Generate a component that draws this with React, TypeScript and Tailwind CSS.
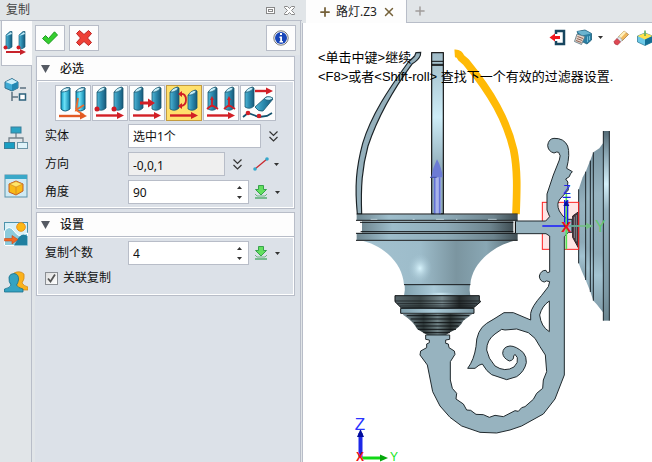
import { useState } from 'react';
import type { ReactNode } from 'react';
import { Plus, X } from 'lucide-react';

const FONT = 'font-["Noto_Sans","Noto_Sans_CJK_SC",sans-serif]';

/* ---------- icons ---------- */

function Post({ x = 0, y = 0, h = 24 }: { x?: number; y?: number; h?: number }) {
  return (
    <g transform={`translate(${x} ${y})`}>
      <path d={`M1 6 L8 1 L10 2 V${h - 2} Q6 ${h + 2} 1 ${h - 1} Z`} fill="url(#post)" stroke="#17566f" strokeWidth="0.8" />
      <path d="M1.5 6.5 Q3 1.5 9 1.2 Q9.5 5 1.5 6.5 Z" fill="#c3eefa" stroke="#17566f" strokeWidth="0.7" />
    </g>
  );
}

function Arrow({ d, head, color = '#d21f26' }: { d: string; head: string; color?: string }) {
  return (
    <>
      <path d={d} stroke={color} strokeWidth="2.4" fill="none" />
      <path d={head} fill={color} />
    </>
  );
}

const bottomArrow = <Arrow d="M3 29.5 H25" head="M24 26 L31 29.5 L24 33 Z" />;

function ModeSvg({ children }: { children: ReactNode }) {
  return (
    <svg viewBox="0 0 34 34" className="size-[34px]" aria-hidden="true">
      {children}
    </svg>
  );
}

const modes = [
  {
    name: '线性',
    icon: (
      <ModeSvg>
        <g fill="url(#cyan)" stroke="#145a78">
          <path d="M5 5 L11 1.5 L14 2 V23 Q9 27 5 23 Z" />
          <path d="M20 5 L26 1.5 L29 2 V23 Q24 27 20 23 Z" />
        </g>
        <path d="M5 6 Q7 1 14 2 Q13 6 5 6 M20 6 Q22 1 29 2 Q28 6 20 6" fill="#d9f6fd" stroke="#145a78" strokeWidth="0.8" />
        <path d="M22 12 L20 24 L28 19 M20 24 L28 29" stroke="#ee6a2c" strokeWidth="1.8" fill="none" />
        <Arrow d="M3 30 H25" head="M24 26.5 L31 30 L24 33.5 Z" color="#e25a24" />
      </ModeSvg>
    ),
  },
  {
    name: '点到点',
    icon: (
      <ModeSvg>
        <Post x={3} />
        <Post x={20} />
        <circle cx="4" cy="23" r="2.5" fill="#cf1b24" />
        <circle cx="21" cy="23" r="2.5" fill="#cf1b24" />
        {bottomArrow}
      </ModeSvg>
    ),
  },
  {
    name: '沿方向',
    icon: (
      <ModeSvg>
        <Post x={3} />
        <Post x={21} />
        <path d="M10 17 H20" stroke="#d21f26" strokeWidth="3" />
        <path d="M18 12.5 L25 17 L18 21.5 Z" fill="#d21f26" />
        {bottomArrow}
      </ModeSvg>
    ),
  },
  {
    name: '绕方向',
    icon: (
      <ModeSvg>
        <Post x={2} />
        <Post x={20} y={3} h={21} />
        <path d="M13 8 Q19 7 19 14 Q19 20 13 20" stroke="#d21f26" strokeWidth="1.8" fill="none" />
        <path d="M15 5 L11 8 L15 11 Z M15 17 L11 20 L15 23 Z" fill="#d21f26" />
        {bottomArrow}
      </ModeSvg>
    ),
  },
  {
    name: '对齐坐标',
    icon: (
      <ModeSvg>
        <Post x={3} />
        <Post x={20} />
        <path d="M8 12 V19 L3 23 M8 19 L14 23 M25 12 V19 L20 23 M25 19 L31 23" stroke="#d21f26" strokeWidth="1.8" fill="none" />
        <path d="M6 14 L8 10 L10 14 Z M23 14 L25 10 L27 14 Z" fill="#d21f26" />
        {bottomArrow}
      </ModeSvg>
    ),
  },
  {
    name: '沿路径',
    icon: (
      <ModeSvg>
        <Post x={3} h={22} />
        <path d="M14 21 L25 11 Q30 10 32 13 L22 25 Q17 26 14 21 Z" fill="url(#post)" stroke="#17566f" strokeWidth="0.8" />
        <path d="M23 13 Q26 9 32 12 Q29 16 23 13 Z" fill="#c3eefa" stroke="#17566f" strokeWidth="0.7" />
        <Arrow d="M14 5 H26" head="M25 1.5 L32 5 L25 8.5 Z" />
        <path d="M2 31 L7 27 L18 31 L26 30 L31 27" stroke="#12526e" strokeWidth="1.8" fill="none" />
        <circle cx="7" cy="27" r="2.3" fill="#d21f26" />
        <circle cx="18" cy="30" r="2.3" fill="#d21f26" />
      </ModeSvg>
    ),
  },
];

const sideTabs = [
  {
    name: '复制',
    icon: (
      <svg viewBox="0 0 24 24" className="size-6" aria-hidden="true">
        <g fill="url(#post)" stroke="#1b5f7c" strokeWidth="0.7">
          <path d="M3 4 L7 0.5 H9 V16 Q6 19 3 17 Z" />
          <path d="M16 4 L20 0.5 H22 V16 Q19 19 16 17 Z" />
        </g>
        <path d="M3 5 L8 1 L9 3 Z M16 5 L21 1 L22 3 Z" fill="#c3eefa" />
        <circle cx="2.5" cy="16.5" r="2" fill="#cf1b24" />
        <circle cx="15.5" cy="16.5" r="2" fill="#cf1b24" />
        <path d="M3 21 H18" stroke="#c7222a" strokeWidth="2" />
        <path d="M17 18 L23 21 L17 24 Z" fill="#c7222a" />
      </svg>
    ),
  },
  {
    name: '历史',
    icon: (
      <svg viewBox="0 0 24 24" className="size-6" aria-hidden="true">
        <path d="M1 4 L8 0.5 L14 4 V10 L8 13 L1 10 Z" fill="#3eaad4" stroke="#33718f" />
        <path d="M1.5 4 L8 1 L13.5 4 L8 6.5 Z" fill="#cdeffa" />
        <path d="M8 6.5 L13.5 4 V10 L8 12.5 Z" fill="#2388b3" />
        <path d="M8 14 V23 M8 19 H14 M16 10 H22" stroke="#5c7280" strokeWidth="1.5" />
        <rect x="15.5" y="16" width="6" height="6" fill="#fff" stroke="#2c627c" strokeWidth="1.5" />
      </svg>
    ),
  },
  {
    name: '装配',
    icon: (
      <svg viewBox="0 0 24 24" className="size-6" aria-hidden="true">
        <path d="M12 7 V12 M5 17 V12 H19 V17" stroke="#74828b" strokeWidth="1.3" fill="none" />
        <rect x="7" y="1" width="10" height="6" fill="#2ba3c4" stroke="#3b7f99" />
        <rect x="0.5" y="16.5" width="10" height="6" fill="#189ec3" stroke="#3b7f99" />
        <rect x="13.5" y="16.5" width="10" height="6" fill="#dff3f9" stroke="#6c95a6" />
      </svg>
    ),
  },
  {
    name: '视图',
    icon: (
      <svg viewBox="0 0 24 24" className="size-6" aria-hidden="true">
        <rect x="1" y="1" width="22" height="22" fill="#cfeaf3" stroke="#5c93aa" />
        <rect x="1" y="1" width="22" height="4" fill="#3ba8c8" />
        <path d="M5 10 L12 7 L19 10 V17 L12 21 L5 18 Z" fill="#f8b916" stroke="#c55f24" />
        <path d="M5.5 10 L12 7.5 L18.5 10 L12 13 Z" fill="#ffe668" stroke="#c9822b" strokeWidth="0.6" />
        <path d="M12 13 V20.5" stroke="#d98c20" />
      </svg>
    ),
  },
  {
    name: '场景',
    icon: (
      <svg viewBox="0 0 24 24" className="size-6" aria-hidden="true">
        <rect x="0.5" y="0.5" width="23" height="23" fill="#d8f0f7" stroke="#4d93ac" />
        <path d="M0.5 9 Q5 2 10 9 T19 13 L23.5 11 V23.5 H0.5 Z" fill="#8ccbdc" stroke="#fff" />
        <path d="M12 20 Q17 9 23.5 14 V23.5 H10 Z" fill="#1f7f9f" />
        <circle cx="17" cy="5" r="4.3" fill="#fdb813" stroke="#e98e1d" />
        <path d="M0.5 16.5 H8 V13.5 L14 17.5 L8 22 V19 H0.5 Z" fill="#f06a24" stroke="#c6481a" strokeWidth="0.6" />
      </svg>
    ),
  },
  {
    name: '用户',
    icon: (
      <svg viewBox="0 0 24 24" className="size-6" aria-hidden="true">
        <path d="M10 3 Q16 0 20 4 Q21 9 18 13 Q20 16 24 17 V20 H13 Z" fill="#fbb21c" stroke="#c98318" strokeWidth="0.7" />
        <path d="M5 7 Q6 3.5 10 3.5 Q15 4 14.5 10 Q14 13 12.5 15 Q14 18 19 19 V22 H0.5 V19 Q6 18 7 15 Q4.5 12 5 7 Z" fill="#35a3c2" stroke="#16708c" strokeWidth="0.8" />
      </svg>
    ),
  },
];

function CheckIcon() {
  return (
    <svg viewBox="0 0 16 14" className="h-3.5 w-4" aria-hidden="true">
      <path d="M0.5 7.5 L3.5 4.5 L6.5 7.5 L12.5 0.8 L15.5 4 L6.5 13 Z" fill="#35cf2f" stroke="#1f9a22" />
    </svg>
  );
}

function CrossIcon() {
  return (
    <svg viewBox="0 0 16 16" className="size-4" aria-hidden="true">
      <path d="M3.5 0.5 L8 4.5 L12.5 0.5 L15.5 3.5 L11.5 8 L15.5 12.5 L12.5 15.5 L8 11.5 L3.5 15.5 L0.5 12.5 L4.5 8 L0.5 3.5 Z" fill="#ee4036" stroke="#bd2323" strokeLinejoin="round" />
    </svg>
  );
}

function InfoIcon() {
  return (
    <svg viewBox="0 0 16 16" className="size-4" aria-hidden="true">
      <circle cx="8" cy="8" r="7.2" fill="#fff" stroke="#777" />
      <circle cx="8" cy="8" r="6" fill="#1846b8" />
      <path d="M7 3 H9 V5 H7 Z M6.5 6.5 H9 V11 H10 V12.5 H6.5 V11 H7.2 V8 H6.5 Z" fill="#fff" />
    </svg>
  );
}

function DownloadIcon() {
  return (
    <svg viewBox="0 0 14 14" className="size-3.5" aria-hidden="true">
      <path d="M4.5 0.5 H9.5 V4.5 H12.5 L7 10 L1.5 4.5 H4.5 Z" fill="#63e05f" stroke="#37a24c" />
      <path d="M1 9 L3 11 H11 L13 9" stroke="#6fb584" fill="none" />
      <path d="M1 13 H13" stroke="#56ad70" strokeWidth="1.5" />
    </svg>
  );
}

function LineIcon() {
  return (
    <svg viewBox="0 0 16 14" className="h-3.5 w-4" aria-hidden="true">
      <path d="M2 12 L14 2" stroke="#c9272e" strokeWidth="1.3" />
      <circle cx="2" cy="12" r="1.8" fill="#35a9cc" />
      <circle cx="14" cy="2" r="1.8" fill="#35a9cc" />
    </svg>
  );
}

function ChevronsIcon() {
  return (
    <svg viewBox="0 0 9 11" className="h-[11px] w-[9px]" aria-hidden="true">
      <path d="M0.5 0.5 L4.5 4.5 L8.5 0.5 M0.5 6 L4.5 10 L8.5 6" stroke="#333" strokeWidth="1.2" fill="none" />
    </svg>
  );
}

function Caret({ up = false }: { up?: boolean }) {
  return (
    <svg viewBox="0 0 5 3" className="h-[3px] w-[5px]" aria-hidden="true">
      <path d={up ? 'M0 3 L2.5 0 L5 3 Z' : 'M0 0 L2.5 3 L5 0 Z'} fill="#333" />
    </svg>
  );
}

/* ---------- form panel ---------- */

function Section({ title, children }: { title: string; children: ReactNode }) {
  const [open, setOpen] = useState(true);
  return (
    <section className="border border-[#b8bdc8]">
      <button
        type="button"
        aria-expanded={open}
        onClick={() => setOpen(!open)}
        className="flex h-6 w-full items-center gap-2.5 border-b border-[#b8bdc8] bg-[#fdfdfd] pl-1 font-medium text-[#222]"
      >
        <svg viewBox="0 0 9 8" className="h-2 w-[9px]" aria-hidden="true">
          <path d="M0 0 H9 L4.5 8 Z" fill="#555a63" />
        </svg>
        {title}
      </button>
      {open && <div className="border border-white bg-[#dce1e8] px-[7px] py-[3px]">{children}</div>}
    </section>
  );
}

function Row({ id, label, children }: { id: string; label: string; children: ReactNode }) {
  return (
    <div className="flex h-6 items-center">
      <label htmlFor={id} className="w-[83px] shrink-0">
        {label}
      </label>
      {children}
    </div>
  );
}

function SpinInput({ id, initial }: { id: string; initial: number }) {
  const [value, setValue] = useState(String(initial));
  const step = (n: number) => setValue(String(Number(value) + n));
  return (
    <>
      <div className="flex h-6 w-[121px] border border-[#b8bdc8] bg-white">
        <input id={id} value={value} onChange={(e) => setValue(e.target.value)} className="min-w-0 flex-1 px-1 pt-0.5 outline-none" />
        <div className="flex w-[18px] flex-col items-center justify-center">
          <button type="button" aria-label="增加" onClick={() => step(1)} className="flex h-2.5 w-full items-center justify-center">
            <Caret up />
          </button>
          <button type="button" aria-label="减少" onClick={() => step(-1)} className="flex h-2.5 w-full items-center justify-center">
            <Caret />
          </button>
        </div>
      </div>
      <button type="button" aria-label="取值" className="ml-[5px] flex items-center gap-[7px]">
        <DownloadIcon />
        <Caret />
      </button>
    </>
  );
}

function CopyPanel() {
  const [mode, setMode] = useState(3);
  return (
    <form className="flex min-w-0 flex-1 flex-col border-r border-[#b8bdc8]" onSubmit={(e) => e.preventDefault()}>
      <div className="flex gap-1 px-[3px] pt-1 pr-1">
        <button type="submit" aria-label="确定" className="flex h-[26px] w-[30px] items-center justify-center border border-[#b8bdc8] bg-[#fdfdfd]">
          <CheckIcon />
        </button>
        <button type="button" aria-label="取消" className="flex h-[26px] w-[30px] items-center justify-center border border-[#b8bdc8] bg-[#fdfdfd]">
          <CrossIcon />
        </button>
        <button type="button" aria-label="信息" className="ml-auto flex h-[26px] w-[30px] items-center justify-center border border-[#b8bdc8] bg-[#fdfdfd]">
          <InfoIcon />
        </button>
      </div>

      <div className="mt-1 ml-[3px] flex flex-1 flex-col gap-[3px] bg-[#dce1e8] pt-px pr-[5px] pl-px">
        <Section title="必选">
          <div className="mb-[3px] flex gap-px pl-2.5">
            {modes.map((m, i) => (
              <button
                key={m.name}
                type="button"
                aria-label={m.name}
                aria-pressed={i === mode}
                onClick={() => setMode(i)}
                className={
                  i === mode
                    ? 'size-9 shrink-0 border border-[#c39b3f] bg-[#ffe06c]'
                    : 'size-9 shrink-0 border border-[#b8bdc8] bg-[#fdfdfd]'
                }
              >
                {m.icon}
              </button>
            ))}
          </div>
          <div className="flex flex-col gap-1">
            <Row id="entity" label="实体">
              <input id="entity" defaultValue="选中1个" className="h-6 w-[133px] border border-[#b8bdc8] bg-white px-1 outline-none" />
              <button type="button" aria-label="展开实体" className="ml-2">
                <ChevronsIcon />
              </button>
            </Row>
            <Row id="direction" label="方向">
              <input id="direction" defaultValue="-0,0,1" className="h-6 w-[97px] border border-[#b8bdc8] bg-[#efefef] px-1 pt-0.5 outline-none" />
              <button type="button" aria-label="展开方向" className="ml-2">
                <ChevronsIcon />
              </button>
              <button type="button" aria-label="选择方向" className="ml-[11px] flex items-center gap-[5px]">
                <LineIcon />
                <Caret />
              </button>
            </Row>
            <Row id="angle" label="角度">
              <SpinInput id="angle" initial={90} />
            </Row>
          </div>
        </Section>

        <Section title="设置">
          <Row id="count" label="复制个数">
            <SpinInput id="count" initial={4} />
          </Row>
          <label className="flex h-[26px] items-center gap-[5px]">
            <input
              type="checkbox"
              defaultChecked
              className="peer size-[13px] appearance-none border border-[#8b8f94] bg-[#f4f4f4] checked:bg-[linear-gradient(135deg,#dedede,#fff)]"
            />
            <svg viewBox="0 0 9 9" className="-ml-4 mr-0.5 hidden size-[9px] peer-checked:block" aria-hidden="true">
              <path d="M1 4.5 L3.5 7.5 L8 0.5" stroke="#555" strokeWidth="1.8" fill="none" />
            </svg>
            关联复制
          </label>
        </Section>
      </div>
    </form>
  );
}

/* ---------- 3D view ---------- */

function Lamp() {
  return (
    <svg viewBox="303 23 349 439" className="block h-[439px] w-[349px]" role="img" aria-label="路灯">
      <defs>
        <linearGradient id="bar" x2="0" y2="1">
          <stop offset="0" stopColor="#9fbac6" />
          <stop offset="0.4" stopColor="#cdedf8" />
          <stop offset="0.7" stopColor="#94b0bd" />
          <stop offset="1" stopColor="#8fabb8" />
        </linearGradient>
        <linearGradient id="bowl">
          <stop offset="0" stopColor="#6f8791" />
          <stop offset="0.2" stopColor="#9dbdcb" />
          <stop offset="0.55" stopColor="#8eabb8" />
          <stop offset="0.85" stopColor="#6c838d" />
          <stop offset="1" stopColor="#3f4d53" />
        </linearGradient>
        <linearGradient id="flare">
          <stop offset="0" stopColor="#a3c1cf" />
          <stop offset="0.38" stopColor="#9dbcca" />
          <stop offset="0.62" stopColor="#7b95a0" />
          <stop offset="0.82" stopColor="#89a7b4" />
          <stop offset="1" stopColor="#5a6f78" />
        </linearGradient>
        <linearGradient id="ring">
          <stop offset="0" stopColor="#80a0ad" />
          <stop offset="0.45" stopColor="#abcbd9" />
          <stop offset="1" stopColor="#7a96a2" />
        </linearGradient>
        <radialGradient id="shine">
          <stop offset="0" stopColor="#d8f4fd" />
          <stop offset="1" stopColor="#a5c5d3" stopOpacity="0" />
        </radialGradient>
        <linearGradient id="dark">
          <stop offset="0" stopColor="#56656a" />
          <stop offset="0.3" stopColor="#3c4748" />
          <stop offset="0.55" stopColor="#75878c" />
          <stop offset="0.75" stopColor="#252b2c" />
          <stop offset="1" stopColor="#4f5c61" />
        </linearGradient>
        <linearGradient id="cone">
          <stop offset="0" stopColor="#7b9099" />
          <stop offset="0.3" stopColor="#2f3a3b" />
          <stop offset="0.5" stopColor="#708286" />
          <stop offset="0.68" stopColor="#2b3333" />
          <stop offset="1" stopColor="#7f959e" />
        </linearGradient>
        <linearGradient id="plate" x2="0" y2="1">
          <stop offset="0" stopColor="#536a75" />
          <stop offset="0.12" stopColor="#8ba7b4" />
          <stop offset="0.28" stopColor="#d4f0fa" />
          <stop offset="0.42" stopColor="#94b1be" />
          <stop offset="0.85" stopColor="#7d99a5" />
          <stop offset="1" stopColor="#6b8691" />
        </linearGradient>
        <linearGradient id="dish" x2="0" y2="1">
          <stop offset="0" stopColor="#7792a0" />
          <stop offset="0.3" stopColor="#97b4c1" />
          <stop offset="0.65" stopColor="#8eabb8" />
          <stop offset="0.78" stopColor="#a3c3d1" />
          <stop offset="1" stopColor="#7f9ba8" />
        </linearGradient>
      </defs>

      {/* cage bars */}
      <g transform="translate(340 40) scale(0.333333)" strokeWidth="3.5">
        <path
          d="M228 38 L242 37 L241 46 Q236 60 217 71 C155 155 112 235 84 318 C66 385 62 440 65 522 L52 522 C44 440 48 385 68 310 C94 225 144 150 205 66 Q220 52 224 48 Z"
          fill="#95b0bc"
          stroke="#1a2226"
        />
        <rect x="275" y="38" width="35" height="484" fill="url(#bar)" stroke="#111" />
        <path d="M275 64 H310 M275 73 H310 M275 76 H310" stroke="#111" strokeWidth="3" />
        <path d="M344 40 Q358 39 364 54 L378 66 C455 160 500 240 521 330 C533 390 531 450 528 522" stroke="#ffba06" strokeWidth="23" fill="none" />
        <path d="M282 412 H303 V530 H282 Z" fill="#a8b3e8" />
        <path d="M284 412 V530 M299 412 V530" stroke="#6372d6" strokeWidth="5" />
        <path d="M291 358 Q306 385 308 412 H274 Q277 385 291 358 Z" fill="#6c7bd5" />
        <path d="M270 412 H290" stroke="#3f4ca5" strokeWidth="3" />
      </g>

      {/* rim, bowl and rings */}
      <g transform="translate(340 200) scale(0.333333)" stroke="#101416" strokeWidth="3">
        <path d="M66 64 H520 V98 H66 Z" fill="url(#bowl)" stroke="none" />
        <path d="M50 43 H533 V61 H50 Z M50 99 H533 V121 H50 Z" fill="url(#bowl)" stroke="none" />
        <path d="M50 42 H533 M48 61 H533 M60 67 H520 M62 95 H520 M48 100 H533 M48 121 H533" />
        <path d="M92 58 H112 M218 58 H224 M288 58 H312 M348 58 H352 M444 58 H470" stroke="#dbe9ee" strokeWidth="2" />
        <path d="M70 123 C140 142 188 195 192 254 H391 C395 195 450 142 520 123 Z" fill="url(#flare)" stroke="none" />
        <ellipse cx="240" cy="205" rx="36" ry="44" fill="url(#shine)" stroke="none" />
        <path d="M194 254 Q196 270 192 287 H391 Q387 270 390 254 Z" fill="url(#ring)" stroke="none" />
        <path d="M192 254 H391" />
        <ellipse cx="300" cy="282" rx="50" ry="7" fill="url(#shine)" stroke="none" />
        <path d="M165 287 H418 V302 L422 305 L400 324 H184 L165 305 Z" fill="url(#dark)" />
        <path d="M165 303 H422 M172 311 H412 M180 318 H405" strokeWidth="2" />
        <path d="M182 325 H402 V340 H182 Z" fill="url(#ring)" />
        <path d="M188 341 H398 L370 362 Q360 384 330 397 L318 405 H262 L232 388 Q220 364 190 345 Z" fill="url(#cone)" stroke="none" />
        <path d="M200 347 H388 M212 357 H374 M222 368 H364 M228 378 H356 M234 388 H348 M250 398 H330" />
      </g>

      {/* wall plate */}
      <g transform="translate(500 120) scale(0.333333)" stroke="#182127" strokeWidth="3">
        <path d="M218 288 L236 275 V385 L218 352 Z" fill="#2d3a40" />
        <path d="M223 290 V354 M229 285 V364" stroke="#7995a1" />
        <g fill="url(#dish)" stroke="none">
          <path d="M236 208 L248 172 L257 155 V480 L246 455 L236 430 Z" />
          <path d="M257 155 L272 118 L280 97 V542 L270 512 L257 480 Z" />
          <path d="M280 97 L298 85 L310 68 V578 L290 553 L280 542 Z" />
        </g>
        <path d="M280 97 V542 M271 122 V516 M257 155 V480 M236 208 V430" />
        <rect x="310" y="33" width="18" height="569" fill="url(#plate)" stroke="none" />
        <path d="M310 33 V602 M328 33 V602" />
        <rect x="127" y="247" width="109" height="141" fill="#ff0000" fillOpacity="0.1" stroke="#ff2020" />
      </g>

      {/* bracket with scroll */}
      <path
        transform="translate(400 280) scale(0.333333)"
        fill="#97b3bf"
        fillRule="evenodd"
        stroke="#20292d"
        strokeWidth="3"
        strokeLinejoin="round"
        d="M476 -383 Q471 -386 462 -381 Q444 -386 443 -404 Q446 -424 462 -425 Q492 -426 503 -402 Q511 -378 500 -335 L517 -325 Q510 -319 508 -310 L497 -303 Q507 -294 503 -285 L505 -270 L480 -243 Q468 -229 478 -207 Q486 -190 503 -182 H516 V-143 H505 L493 -130 V285 L465 357 L430 402 L365 438 L330 450 L290 459 L240 457 L185 438 L150 412 L120 378 L98 335 L88 285 L82 255 L60 225 L62 213 L80 203 V192 L88 188 V180 L77 178 V165 H149 V178 L137 180 V190 L145 192 L147 203 L163 213 L165 223 L151 245 V300 L157 325 L170 340 L168 357 L190 372 L200 390 L212 391 L228 403 L250 404 L268 412 L285 406 L310 410 L345 392 L355 394 L365 383 L375 380 L400 358 L410 340 L428 325 L430 300 L440 275 L436 225 L420 200 L405 175 L385 158 L350 147 L315 150 L305 148 L285 162 Q260 180 260 210 Q264 235 285 258 Q315 278 342 261 Q356 248 352 233 L345 223 L341 228 Q342 241 328 243 Q310 235 308 220 Q309 200 330 198 Q348 198 370 218 Q380 230 379 248 Q373 275 350 290 L320 299 L275 284 Q260 275 247 252 Q238 253 225 265 H203 Q222 240 228 200 Q229 150 260 130 L285 115 L312 98 H340 L392 120 V100 Q395 80 425 46 L445 20 L449 5 Q438 0 433 6 Q419 4 418 -12 Q423 -30 438 -29 L442 -22 L449 -24 V-132 L438 -139 H346 V-177 H437 L449 -190 L441 -210 V-258 L460 -315 L478 -360 Q484 -374 476 -383 Z M448 63 Q426 78 419 105 Q423 140 448 155 Z"
      />
      <path d="M515.5 222 V233" stroke="#111" />

      {/* local frame */}
      <g transform="translate(500 120) scale(0.333333)">
        <path d="M127 318 H236" stroke="#1919ff" strokeWidth="4" />
        <path d="M199 220 V388" stroke="#55e555" strokeWidth="5" />
        <path d="M199 318 H258" stroke="#72bd83" strokeWidth="5" />
        <path d="M258 308 L280 318 L258 328 Z" fill="#72bd83" />
        <path d="M188 232 H212 M194 240 V316 M203 240 V316" stroke="#1521e8" strokeWidth="4" />
        <path d="M190 258 L199 240 L208 258 Z" fill="#0810a0" />
        <text x="201" y="222" textAnchor="middle" fontSize="36" fontFamily="Liberation Sans, sans-serif" fill="#1c26e8">Z</text>
        <text x="301" y="336" textAnchor="middle" fontSize="48" fontFamily="Liberation Sans, sans-serif" fill="#63c96f">Y</text>
        <text x="199" y="335" textAnchor="middle" fontSize="45" fontWeight="bold" fontFamily="Liberation Sans, sans-serif" fill="#e8141a">X</text>
      </g>

      {/* world axes */}
      <g>
        <path d="M358.5 433 H362.5 V457 H358.5 Z" fill="#1d28e8" />
        <path d="M360.5 429 L364 437 H357 Z" fill="#000c9c" />
        <path d="M362 456.5 H381 V459.5 H362 Z" fill="#12d816" />
        <path d="M380 454.5 L388 458 L380 461.5 Z" fill="#05a80b" />
        <text x="360" y="430" textAnchor="middle" fontSize="17" fontFamily="Liberation Sans, sans-serif" fill="#2a34ff">Z</text>
        <text x="394" y="461" textAnchor="middle" dominantBaseline="auto" fontSize="12" fontFamily="Liberation Sans, sans-serif" fill="#16e61c">Y</text>
        <text x="360" y="461" textAnchor="middle" fontSize="12" fontWeight="bold" fontFamily="Liberation Sans, sans-serif" fill="#f01414">X</text>
      </g>
    </svg>
  );
}

function ViewToolbar() {
  return (
    <div className="absolute top-[6px] -right-px flex items-center">
      <button type="button" aria-label="退出">
        <svg viewBox="0 0 17 17" className="size-[17px]" aria-hidden="true">
          <path d="M7 5 V2 H15 V15 H7 V12" stroke="#17465f" strokeWidth="2.5" fill="none" />
          <path d="M0.5 8.5 L6 4.5 V7 H11 V10 H6 V12.5 Z" fill="#f01820" />
        </svg>
      </button>
      <button type="button" aria-label="视图样式" className="ml-2 flex items-center gap-1.5">
        <svg viewBox="0 0 18 17" className="h-[17px] w-[18px]" aria-hidden="true">
          <path d="M3 2.5 L11 1 L17.5 4.5 V11 L13 15 L7 12 Z" fill="#2a7fa3" stroke="#1c5a76" strokeWidth="0.8" />
          <path d="M3 2.5 L11 1.5 L17 4.5 L8 6.5 Z" fill="#6ab3cf" />
          <path d="M3 5 L11 7.5 L7.5 15.5 L0.5 12.5 Z" fill="#e2d6cc" stroke="#567482" strokeWidth="0.8" />
          <path d="M3.5 7.5 L9 9.5 M2.8 9.5 L8.2 11.5 M2 11.5 L7.4 13.5" stroke="#8a5546" strokeWidth="0.9" />
          <path d="M13.5 7.5 V13 M15.5 7 V11" stroke="#6fbcd8" />
        </svg>
        <Caret />
      </button>
      <button type="button" aria-label="清除" className="ml-2.5">
        <svg viewBox="0 0 16 16" className="size-4" aria-hidden="true">
          <path d="M11 1 L15.5 4.5 L9 11 L5 7 Z" fill="#f1b95c" stroke="#9e713a" strokeWidth="0.7" />
          <path d="M11 1 L13 2.5 L7 9 L5 7 Z" fill="#fff0ba" />
          <path d="M6 6.5 L9.5 10 L7.5 12 L4 8.5 Z" fill="#dfe7ed" stroke="#8b9297" strokeWidth="0.6" />
          <path d="M4 8.5 L7.5 12 L4.5 15 Q1 14.5 1 11.5 Z" fill="#de4853" stroke="#a52a36" strokeWidth="0.6" />
        </svg>
      </button>
      <button type="button" aria-label="着色" className="ml-2">
        <svg viewBox="0 0 16 16" className="size-4" aria-hidden="true">
          <path d="M0.5 6 L8 3 L15.5 6 V12 L8 15.5 L0.5 12 Z" fill="#6cc9e8" stroke="#26728f" strokeWidth="0.7" />
          <path d="M0.5 6 L8 3 L15.5 6 L8 9.5 Z" fill="#ffe14a" />
          <path d="M8 9.5 V15.5 L15.5 12 V6 Z" fill="#136f95" />
          <path d="M8 0.5 V6" stroke="#53a85a" strokeWidth="1.5" />
        </svg>
      </button>
    </div>
  );
}

function Viewport() {
  return (
    <main className="flex min-w-0 flex-1 flex-col">
      <div className="flex h-[23px] items-stretch pl-1">
        <div className="-mr-px flex w-[101px] items-center border-r border-[#b8bdc8] bg-[#fdfdfd] pl-3 text-[#222]">
          <Plus className="size-3.5 text-[#75613a]" strokeWidth={3} />
          <span className="ml-1">路灯.Z3</span>
          <button type="button" aria-label="关闭标签" className="ml-[5px]">
            <X className="size-3.5 text-[#75613a]" strokeWidth={2.5} />
          </button>
        </div>
        <div className="flex flex-1 items-center border-b border-[#b8bdc8] pl-[7px]">
          <button type="button" aria-label="新建标签">
            <Plus className="size-3.5 text-[#a09c9a]" strokeWidth={2.5} />
          </button>
        </div>
      </div>
      <div className="relative flex-1 overflow-hidden border-l border-[#b8bdc8] bg-white">
        <Lamp />
        <p className='absolute top-[25px] left-[15px] font-["Liberation_Sans","Noto_Sans_CJK_SC",sans-serif] text-[13px] leading-[19px] whitespace-nowrap text-black'>
          &lt;单击中键&gt;继续
          <br />
          &lt;F8&gt;或者&lt;Shift-roll&gt; 查找下一个有效的过滤器设置.
        </p>
        <ViewToolbar />
      </div>
    </main>
  );
}

export default function App() {
  const [tab, setTab] = useState(0);
  return (
    <div className={`flex min-h-screen bg-[#e1e5e8] text-xs text-[#111] ${FONT}`}>
      <svg className="absolute size-0" aria-hidden="true">
        <defs>
          <linearGradient id="post">
            <stop offset="0" stopColor="#4fb6d6" />
            <stop offset="0.5" stopColor="#2a87ab" />
            <stop offset="1" stopColor="#17597a" />
          </linearGradient>
          <linearGradient id="cyan">
            <stop offset="0" stopColor="#0d9cc4" />
            <stop offset="0.4" stopColor="#6de1f7" />
            <stop offset="1" stopColor="#0a7da6" />
          </linearGradient>
        </defs>
      </svg>

      <aside className="flex w-[302px] shrink-0 flex-col">
        <header className="flex h-[21px] items-center border-b border-[#b8bdc8] pr-[7px] pl-1.5">
          <h1 className="mr-auto text-[#444]">复制</h1>
          <button type="button" aria-label="浮动">
            <svg viewBox="0 0 9 7" className="h-[7px] w-[9px]" aria-hidden="true">
              <rect x="0.5" y="0.5" width="8" height="6" fill="#fff" stroke="#888" />
              <rect x="2.5" y="2.5" width="4" height="2" fill="#fff" stroke="#888" />
            </svg>
          </button>
          <button type="button" aria-label="关闭" className="ml-[9px]">
            <svg viewBox="0 0 11 9" className="h-[9px] w-[11px]" aria-hidden="true">
              <path d="M0.5 0.5 H3.5 L5.5 2.5 L7.5 0.5 H10.5 V1.5 L7.5 4.5 L10.5 7.5 V8.5 H7.5 L5.5 6.5 L3.5 8.5 H0.5 V7.5 L3.5 4.5 L0.5 1.5 Z" fill="#fff" stroke="#888" />
            </svg>
          </button>
        </header>
        <div className="flex flex-1 pr-px">
          <nav className="flex w-8 flex-col">
            {sideTabs.map((t, i) => (
              <button
                key={t.name}
                type="button"
                aria-label={t.name}
                aria-pressed={i === tab}
                onClick={() => setTab(i)}
                className={
                  i === tab
                    ? 'ml-px flex h-[45px] items-center justify-center border-b border-l border-[#b8bdc8] bg-[#fdfdfd] pr-1'
                    : 'flex h-12 items-center justify-center border-r border-[#b8bdc8]'
                }
              >
                {t.icon}
              </button>
            ))}
            <div className="flex-1 border-r border-[#b8bdc8]" />
          </nav>
          <CopyPanel />
        </div>
      </aside>
      <Viewport />
    </div>
  );
}
